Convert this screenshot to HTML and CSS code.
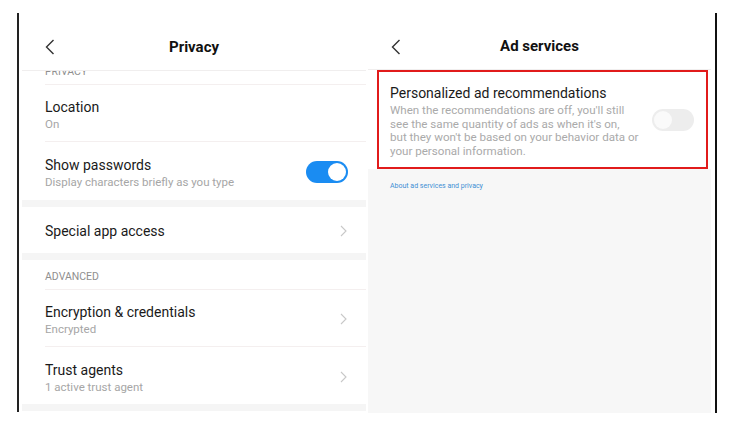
FILE: index.html
```html
<!DOCTYPE html>
<html>
<head>
<meta charset="utf-8">
<link rel="stylesheet" href="styles.css">
</head>
<body>
<div class="stage">
  <div class="edge edge-left"></div>
  <section class="panel panel-left">
    <header class="bar">
      <svg class="back" width="10" height="16" viewBox="0 0 10 16"><path d="M8.5 1 L1.5 8 L8.5 15" fill="none" stroke="#333" stroke-width="1.4"/></svg>
      <h1 class="bar-title">Privacy</h1>
    </header>
    <div class="list">
      <div class="label label-clipped">PRIVACY</div>
      <div class="row">
        <div class="row-text"><div class="title">Location</div><div class="sub">On</div></div>
      </div>
      <div class="row row-tall">
        <div class="row-text"><div class="title">Show passwords</div><div class="sub">Display characters briefly as you type</div></div>
        <div class="toggle on"><span class="knob"></span></div>
      </div>
      <div class="strip"></div>
      <div class="row row-single">
        <div class="row-text"><div class="title">Special app access</div></div>
        <svg class="chev" width="7" height="12" viewBox="0 0 7 12"><path d="M1 1 L6 6 L1 11" fill="none" stroke="#c8c8c8" stroke-width="1.1"/></svg>
      </div>
      <div class="strip"></div>
      <div class="label">ADVANCED</div>
      <div class="row">
        <div class="row-text"><div class="title">Encryption &amp; credentials</div><div class="sub">Encrypted</div></div>
        <svg class="chev" width="7" height="12" viewBox="0 0 7 12"><path d="M1 1 L6 6 L1 11" fill="none" stroke="#c8c8c8" stroke-width="1.1"/></svg>
      </div>
      <div class="row row-last">
        <div class="row-text"><div class="title">Trust agents</div><div class="sub">1 active trust agent</div></div>
        <svg class="chev" width="7" height="12" viewBox="0 0 7 12"><path d="M1 1 L6 6 L1 11" fill="none" stroke="#c8c8c8" stroke-width="1.1"/></svg>
      </div>
      <div class="strip"></div>
    </div>
  </section>
  <section class="panel panel-right">
    <header class="bar">
      <svg class="back" width="10" height="16" viewBox="0 0 10 16"><path d="M8.5 1 L1.5 8 L8.5 15" fill="none" stroke="#333" stroke-width="1.4"/></svg>
      <h1 class="bar-title">Ad services</h1>
    </header>
    <div class="ad-body">
      <div class="ad-card">
        <div class="ad-box">
          <div class="ad-text">
            <div class="ad-title">Personalized ad recommendations</div>
            <div class="ad-desc">When the recommendations are off, you'll still see the same quantity of ads as when it's on,<br>but they won't be based on your behavior data or your personal information.</div>
          </div>
          <div class="toggle off"><span class="knob"></span></div>
        </div>
      </div>
      <div class="ad-link">About ad services and privacy</div>
    </div>
  </section>
  <div class="edge edge-right"></div>
</div>
</body>
</html>
```

FILE: styles.css
```css
* { box-sizing: border-box; margin: 0; padding: 0; }
html, body { background: #fff; }
body {
  font-family: Roboto, "Noto Sans", "Liberation Sans", sans-serif;
  color: #1a1a1a;
  width: 733px;
  height: 433px;
  overflow: hidden;
}
.stage {
  display: flex;
  height: 413px;
}
.edge {
  width: 2px;
  margin-top: 13px;
  background: #222;
}
.edge-left { margin-left: 17px; height: 399px; }
.edge-right { margin-left: 4px; height: 400px; background: #111; }
.panel { display: flex; flex-direction: column; height: 413px; }
.panel-left { width: 344px; margin-left: 3px; }
.panel-right { width: 343px; margin-left: 2px; }

.bar {
  position: relative;
  height: 71px;
  border-bottom: 1px solid #f0eeee;
  display: flex;
  align-items: center;
  justify-content: center;
  padding-top: 24px;
  flex: none;
}
.panel-right .bar { height: 70px; padding-top: 23px; }
.back { position: absolute; left: 23px; top: 39px; }
.bar-title {
  font-size: 15px;
  font-weight: 700;
  color: #111;
}

.list { flex: 1; overflow: hidden; display: flex; flex-direction: column; }
.label {
  height: 30px;
  display: flex;
  align-items: center;
  padding-top: 3px;
  margin-left: 23px;
  font-size: 10.5px;
  color: #8f8f8f;
  flex: none;
  border-bottom: 1px solid #f4efef;
}
.label-clipped { margin-top: -16px; }
.row {
  height: 57px;
  flex: none;
  display: flex;
  align-items: center;
  margin-left: 23px;
  padding-right: 18px;
  border-bottom: 1px solid #f4efef;
}
.row-tall { height: 58px; border-bottom: none; }
.row-last { border-bottom: none; }
.row-single { height: 46px; border-bottom: none; }
.row-text { flex: 1; padding-top: 6px; }
.row-tall .row-text { padding-top: 5px; }
.row-single .row-text { padding-top: 2px; }
.title { font-size: 14px; line-height: 17px; color: #1a1a1a; }
.sub { font-size: 11.5px; line-height: 17px; color: #a6a6a6; }
.strip { height: 7px; background: #f5f5f5; flex: none; }
.chev { margin-right: 1px; margin-top: 2px; }

.toggle {
  width: 42px;
  height: 22px;
  border-radius: 11px;
  position: relative;
  flex: none;
}
.toggle.on { background: #1a8cf2; margin-top: 2px; margin-left: 1px; }
.toggle.off { background: #ededed; }
.knob {
  position: absolute;
  top: 2px;
  width: 18px;
  height: 18px;
  border-radius: 50%;
  background: #fff;
}
.toggle.on .knob { right: 2px; }
.toggle.off .knob { left: 2px; background: #fafafa; }

.ad-body { flex: 1; background: #f7f7f7; }
.ad-card { background: #fff; padding: 0 3px 0 9px; }
.ad-box {
  height: 99px;
  border: 2px solid #e11b1b;
  display: flex;
  align-items: flex-start;
  padding: 13px 12px 0 11px;
}
.ad-text { flex: 1; }
.ad-title { font-size: 14px; line-height: 16px; color: #1a1a1a; }
.ad-desc { font-size: 11.6px; line-height: 13.7px; color: #aaa; width: 254px; margin-top: 3px; }
.ad-box .toggle { margin-top: 24px; }
.ad-link {
  font-size: 7px;
  color: #3f8fd4;
  padding: 13px 0 0 22px;
}
```
